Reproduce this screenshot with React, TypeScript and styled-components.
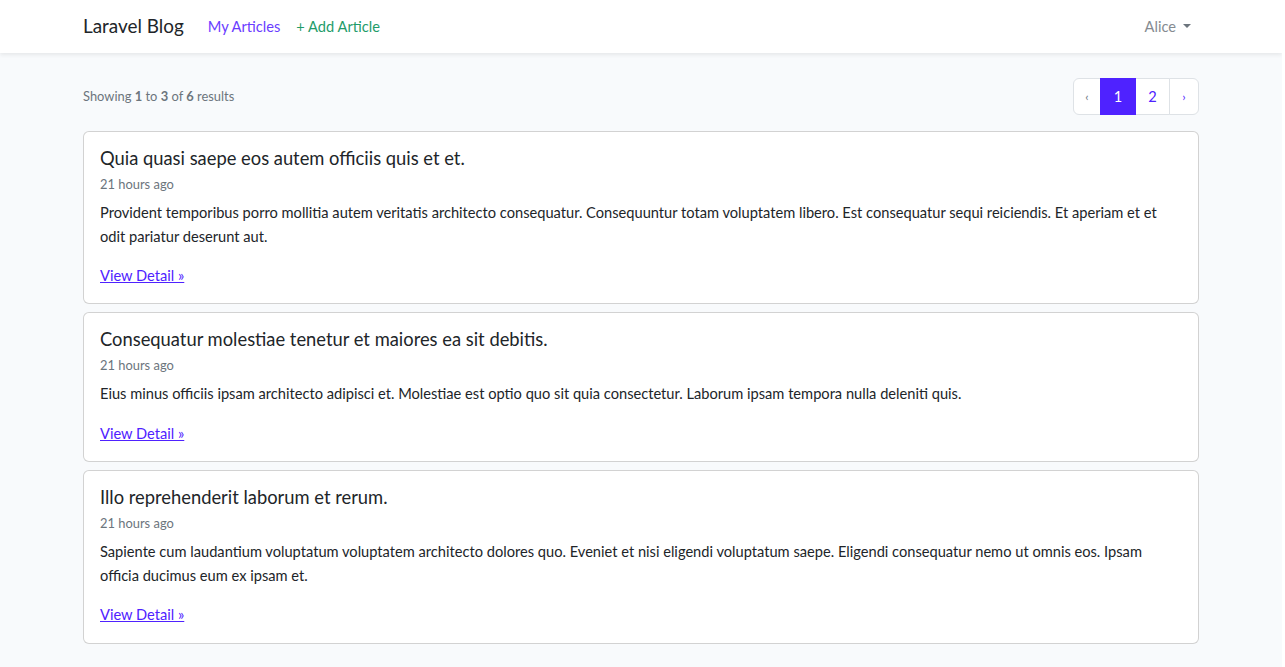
import React from "react";
import styled, { createGlobalStyle } from "styled-components";

const PRIMARY = "#4f22ff";
const FONT = "Lato, 'Noto Sans', sans-serif";

const GlobalStyle = createGlobalStyle`
  *, *::before, *::after { box-sizing: border-box; }
  html { background: #fff; }
  body {
    margin: 0 3px 0 0;
    min-height: 100vh;
    background: #f8fafc;
    font-family: ${FONT};
    font-size: 14.65px;
    line-height: 1.6;
    color: #212529;
  }
`;

const Navbar = styled.nav`
  height: 53px;
  background: #fff;
  box-shadow: 0 2px 4px rgba(0, 0, 0, 0.075);
  display: flex;
  align-items: center;
`;

const Container = styled.div`
  width: 100%;
  max-width: 1140px;
  margin: 0 auto;
  padding: 0 12px;
`;

const NavInner = styled(Container)`
  display: flex;
  align-items: center;
  justify-content: space-between;
`;

const NavLeft = styled.div`
  display: flex;
  align-items: center;
`;

const Brand = styled.a`
  font-size: 18.9px;
  color: #212529;
  text-decoration: none;
  margin-right: 16px;
  line-height: 1.5;
`;

const NavLink = styled.a<{ $tone?: "primary" | "success" | "muted" }>`
  padding: 8px;
  font-size: 14.65px;
  text-decoration: none;
  color: ${(p) =>
    p.$tone === "success" ? "#1f9c6a" : p.$tone === "muted" ? "#858b91" : "#6a3dff"};
  display: flex;
  align-items: center;
`;

const Caret = styled.span`
  display: inline-block;
  margin-left: 7px;
  width: 0;
  height: 0;
  border-top: 4.5px solid #6c757d;
  border-left: 4.5px solid transparent;
  border-right: 4.5px solid transparent;
  transform: translateY(-1px);
`;

const Main = styled(Container)`
  padding-top: 25px;
  padding-bottom: 24px;
`;

const TopRow = styled.div`
  display: flex;
  align-items: center;
  justify-content: space-between;
  margin-bottom: 16px;
`;

const Summary = styled.p`
  margin: 0;
  font-size: 12.9px;
  color: #6c757d;
`;

const Strong = styled.span`
  font-weight: 700;
`;

const Pagination = styled.ul`
  display: flex;
  list-style: none;
  margin: 0;
  padding: 0;
`;

const PageItem = styled.li<{ $active?: boolean; $muted?: boolean; $w: number }>`
  width: ${(p) => p.$w}px;
  height: 37px;
  display: flex;
  align-items: center;
  justify-content: center;
  border: 1px solid ${(p) => (p.$active ? PRIMARY : "#dee2e6")};
  margin-left: -1px;
  background: ${(p) => (p.$active ? PRIMARY : "#fff")};
  color: ${(p) => (p.$active ? "#fff" : p.$muted ? "#6c757d" : PRIMARY)};
  font-size: 14.65px;
  position: relative;
  z-index: ${(p) => (p.$active ? 1 : 0)};
  &:first-child {
    margin-left: 0;
    border-radius: 6px 0 0 6px;
  }
  &:last-child {
    border-radius: 0 6px 6px 0;
  }
`;

const Small = styled.span`
  font-size: 12px;
`;

const Card = styled.article`
  background: #fff;
  border: 1px solid rgba(0, 0, 0, 0.175);
  border-radius: 6px;
  padding: 16px;
  margin-bottom: 8px;
`;

const CardTitle = styled.h5`
  margin: 0 0 5px;
  font-size: 18.35px;
  font-weight: 400;
  line-height: 21px;
`;

const CardDate = styled.div`
  font-size: 12.9px;
  color: #6c757d;
  line-height: 20px;
  margin: 0 0 7px;
`;

const CardText = styled.p`
  margin: 0 0 16px;
  line-height: 23.5px;
`;

const DetailLink = styled.a`
  color: ${PRIMARY};
  text-decoration: underline;
  display: inline-block;
  line-height: 23px;
`;

const articles = [
  {
    title: "Quia quasi saepe eos autem officiis quis et et.",
    body:
      "Provident temporibus porro mollitia autem veritatis architecto consequatur. Consequuntur totam voluptatem libero. Est consequatur sequi reiciendis. Et aperiam et et odit pariatur deserunt aut.",
  },
  {
    title: "Consequatur molestiae tenetur et maiores ea sit debitis.",
    body:
      "Eius minus officiis ipsam architecto adipisci et. Molestiae est optio quo sit quia consectetur. Laborum ipsam tempora nulla deleniti quis.",
  },
  {
    title: "Illo reprehenderit laborum et rerum.",
    body:
      "Sapiente cum laudantium voluptatum voluptatem architecto dolores quo. Eveniet et nisi eligendi voluptatum saepe. Eligendi consequatur nemo ut omnis eos. Ipsam officia ducimus eum ex ipsam et.",
  },
];

export default function App() {
  return (
    <>
      <GlobalStyle />
      <Navbar>
        <NavInner>
          <NavLeft>
            <Brand href="#">Laravel Blog</Brand>
            <NavLink href="#">My Articles</NavLink>
            <NavLink href="#" $tone="success">+ Add Article</NavLink>
          </NavLeft>
          <NavLink href="#" $tone="muted">
            Alice
            <Caret />
          </NavLink>
        </NavInner>
      </Navbar>
      <Main as="main">
        <TopRow>
          <Summary>
            Showing <Strong>1</Strong> to <Strong>3</Strong> of <Strong>6</Strong> results
          </Summary>
          <Pagination>
            <PageItem $w={28} $muted>
              <Small>‹</Small>
            </PageItem>
            <PageItem $w={36} $active>1</PageItem>
            <PageItem $w={35}>2</PageItem>
            <PageItem $w={30}>
              <Small>›</Small>
            </PageItem>
          </Pagination>
        </TopRow>
        {articles.map((a) => (
          <Card key={a.title}>
            <CardTitle>{a.title}</CardTitle>
            <CardDate>21 hours ago</CardDate>
            <CardText>{a.body}</CardText>
            <DetailLink href="#">View Detail »</DetailLink>
          </Card>
        ))}
      </Main>
    </>
  );
}
